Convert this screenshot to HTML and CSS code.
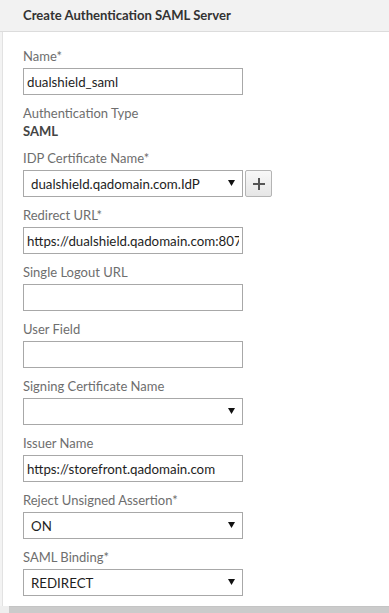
FILE: index.html
```html
<!DOCTYPE html>
<html>
<head>
<meta charset="utf-8">
<title>Create Authentication SAML Server</title>
<link rel="stylesheet" href="styles.css">
</head>
<body>
<div class="page">
  <div class="header">Create Authentication SAML Server</div>
  <div class="content">
    <form class="form">
      <div class="field">
        <label class="label">Name*</label>
        <input class="input" type="text" value="dualshield_saml">
      </div>
      <div class="field">
        <div class="label">Authentication Type</div>
        <div class="value">SAML</div>
      </div>
      <div class="field">
        <label class="label">IDP Certificate Name*</label>
        <div class="row">
          <div class="select-wrap">
            <select class="select"><option>dualshield.qadomain.com.IdP</option></select>
            <svg class="arrow" width="7" height="6" viewBox="0 0 7 6"><polygon points="0,0 7,0 3.5,6" fill="#111"/></svg>
          </div>
          <button class="add-btn" type="button">
            <svg width="12" height="12" viewBox="0 0 12 12"><rect x="5" y="0" width="2" height="12" fill="#555"/><rect x="0" y="5" width="12" height="2" fill="#555"/></svg>
          </button>
        </div>
      </div>
      <div class="field">
        <label class="label">Redirect URL*</label>
        <input class="input" type="text" value="https://dualshield.qadomain.com:8074/sso/saml">
      </div>
      <div class="field">
        <label class="label">Single Logout URL</label>
        <input class="input" type="text" value="">
      </div>
      <div class="field">
        <label class="label">User Field</label>
        <input class="input" type="text" value="">
      </div>
      <div class="field">
        <label class="label">Signing Certificate Name</label>
        <div class="select-wrap">
          <select class="select"><option></option></select>
          <svg class="arrow" width="7" height="6" viewBox="0 0 7 6"><polygon points="0,0 7,0 3.5,6" fill="#111"/></svg>
        </div>
      </div>
      <div class="field">
        <label class="label">Issuer Name</label>
        <input class="input" type="text" value="https://storefront.qadomain.com">
      </div>
      <div class="field">
        <label class="label">Reject Unsigned Assertion*</label>
        <div class="select-wrap">
          <select class="select"><option>ON</option></select>
          <svg class="arrow" width="7" height="6" viewBox="0 0 7 6"><polygon points="0,0 7,0 3.5,6" fill="#111"/></svg>
        </div>
      </div>
      <div class="field">
        <label class="label">SAML Binding*</label>
        <div class="select-wrap">
          <select class="select"><option>REDIRECT</option></select>
          <svg class="arrow" width="7" height="6" viewBox="0 0 7 6"><polygon points="0,0 7,0 3.5,6" fill="#111"/></svg>
        </div>
      </div>
    </form>
  </div>
  <div class="footer">
    <div class="footer-corner"></div>
    <div class="footer-bar"></div>
  </div>
</div>
</body>
</html>
```

FILE: styles.css
```css
html, body {
  margin: 0;
  padding: 0;
  background: #ffffff;
}
body {
  font-family: Lato, "Open Sans", Arial, sans-serif;
  width: 389px;
  height: 613px;
  overflow: hidden;
}
.page {
  display: flex;
  flex-direction: column;
  height: 613px;
  background: #f3f3f3;
}
.header {
  height: 31px;
  border-bottom: 1px solid #dcdcdc;
  background: #f2f2f2;
  padding-left: 23px;
  font-size: 13.1px;
  font-weight: 700;
  color: #333;
  line-height: 30px;
}
.content {
  flex: 1;
  margin-left: 2px;
  border-left: 1px solid #e2e2e2;
  background: #fff;
}
.form {
  padding: 6px 0 0 20px;
  margin: 0;
}
.field {
  padding-top: 10px;
}
.label {
  display: block;
  font-size: 13px;
  line-height: 16px;
  height: 16px;
  color: #6e6e6e;
  margin-bottom: 4px;
  white-space: nowrap;
}
.value {
  font-size: 13px;
  font-weight: 700;
  line-height: 17px;
  color: #444;
  margin-top: -2px;
}
.input, .select {
  box-sizing: border-box;
  display: block;
  width: 220px;
  height: 27px;
  margin: 0;
  border: 1px solid #a8a8a8;
  border-radius: 0;
  background: #fff;
  font-family: Lato, "Open Sans", Arial, sans-serif;
  font-size: 13.3px;
  color: #1e1e1e;
  outline: none;
}
.input {
  padding: 0 3px;
}
.select {
  -webkit-appearance: none;
  appearance: none;
  padding: 0 20px 0 7px;
}
.row {
  display: flex;
  gap: 2px;
  align-items: flex-start;
}
.select-wrap {
  position: relative;
  width: 220px;
}
.arrow {
  position: absolute;
  right: 8px;
  top: 10px;
  pointer-events: none;
}
.add-btn {
  box-sizing: border-box;
  width: 27px;
  height: 27px;
  margin: 0;
  padding: 0;
  border: 1px solid #b4b4b4;
  border-radius: 2px;
  background: linear-gradient(#f8f8f8, #e6e6e6);
  display: flex;
  align-items: center;
  justify-content: center;
}
.footer {
  display: flex;
  height: 7px;
}
.footer-corner {
  width: 9px;
  background: #eeeeee;
}
.footer-bar {
  flex: 1;
  background: #cbcbcb;
  border-top: 1px solid #c4c4c4;
}
```
